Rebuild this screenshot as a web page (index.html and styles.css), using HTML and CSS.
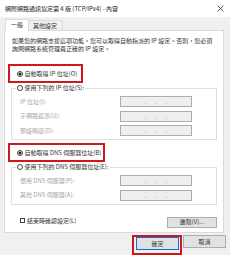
FILE: index.html
```html
<!DOCTYPE html>
<html lang="zh-Hant">
<head>
<meta charset="utf-8">
<title>網際網路通訊協定第 4 版 (TCP/IPv4) - 內容</title>
<link rel="stylesheet" href="styles.css">
</head>
<body>
<div class="titlebar">
  <span class="title">網際網路通訊協定第 4 版 (TCP/IPv4) - 內容</span>
  <svg class="close" width="7" height="7" viewBox="0 0 7 7"><path d="M0.5 0.5 L6.5 6.5 M6.5 0.5 L0.5 6.5" stroke="#333" stroke-width="0.8" fill="none"/></svg>
</div>
<div class="tabs">
  <div class="tab active">一般</div>
  <div class="tab">其他設定</div>
</div>
<div class="panel">
  <p class="desc">如果您的網路支援這項功能，您可以取得自動指派的 IP 設定。否則，您必須<br>詢問網路系統管理員正確的 IP 設定。</p>
  <div class="mark mark-ip">
    <div class="radio-row"><span class="radio checked"></span>自動取得 IP 位址(O)</div>
  </div>
  <fieldset class="group">
    <legend class="radio-row"><span class="radio"></span>使用下列的 IP 位址(S):</legend>
    <div class="field"><span class="flabel">IP 位址(I):</span><span class="ip"><i></i><i></i><i></i></span></div>
    <div class="field"><span class="flabel">子網路遮罩(U):</span><span class="ip"><i></i><i></i><i></i></span></div>
    <div class="field"><span class="flabel">預設閘道(D):</span><span class="ip"><i></i><i></i><i></i></span></div>
  </fieldset>
  <div class="mark mark-dns">
    <div class="radio-row"><span class="radio checked"></span>自動取得 DNS 伺服器位址(B)</div>
  </div>
  <fieldset class="group group-dns">
    <legend class="radio-row"><span class="radio"></span>使用下列的 DNS 伺服器位址(E):</legend>
    <div class="field"><span class="flabel">慣用 DNS 伺服器(P):</span><span class="ip"><i></i><i></i><i></i></span></div>
    <div class="field"><span class="flabel">其他 DNS 伺服器(A):</span><span class="ip"><i></i><i></i><i></i></span></div>
  </fieldset>
  <div class="bottom">
    <div class="check-row"><span class="checkbox"></span>結束時確認設定(L)</div>
    <div class="btn adv">進階(V)...</div>
  </div>
</div>
<div class="footer">
  <div class="mark-btn"><div class="btn fbtn default">確定</div></div>
  <div class="btn fbtn">取消</div>
</div>
</body>
</html>
```

FILE: styles.css
```css
* { box-sizing: border-box; }
html, body { margin: 0; padding: 0; }
body {
  width: 230px;
  height: 255px;
  overflow: hidden;
  background: #f0f0f0;
  font-family: "Noto Sans CJK TC", "Noto Sans", sans-serif;
  font-size: 6px;
  line-height: 8px;
  color: #333;
}
.titlebar {
  height: 17px;
  background: #fff;
  display: flex;
  align-items: center;
  justify-content: space-between;
  padding: 0 6px 0 5px;
}
.title { color: #222; }
.tabs {
  display: flex;
  align-items: flex-end;
  padding-left: 5px;
  margin-top: 2px;
  height: 11px;
}
.tab {
  height: 10px;
  line-height: 9px;
  padding: 0 5px 0 4px;
  border: 1px solid #dadada;
  border-bottom: none;
  border-left: none;
}
.tab.active {
  position: relative;
  height: 12px;
  margin-bottom: -1px;
  line-height: 10px;
  padding: 0 5px;
  background: #fff;
  border-left: 1px solid #dadada;
  border-right: 1px solid #dadada;
}
.panel {
  width: 220px;
  height: 203px;
  margin-left: 4px;
  background: #fff;
  border: 1px solid #dadada;
}
.desc {
  margin: 6px 0 0 7px;
  color: #333;
}
.mark {
  display: flex;
  align-items: center;
  height: 19px;
  margin-left: 3px;
  border: 2px solid #d2161e;
  padding-left: 7px;
}
.mark-ip { width: 75px; margin-top: 11px; }
.mark-dns { width: 97px; margin-top: 3px; }
.radio-row {
  display: flex;
  align-items: center;
  line-height: 8px;
}
.radio {
  width: 6px;
  height: 6px;
  border: 0.8px solid #444;
  border-radius: 50%;
  background: #fff;
  margin-right: 1.5px;
  flex: none;
}
.radio.checked {
  background: radial-gradient(circle, #222 0 1.3px, #fff 1.7px);
}
.group {
  width: 206px;
  margin: 1px 0 0 6px;
  padding: 4px 24px 3px 4px;
  border: 1px solid #e0e0e0;
  min-inline-size: 0;
}
.group legend {
  padding: 0 1px;
}
.field {
  display: flex;
  justify-content: space-between;
  align-items: center;
  height: 11px;
}
.field + .field { margin-top: 3.5px; }
.flabel {
  padding-left: 4px;
  color: #a6a6a6;
}
.ip {
  width: 72px;
  height: 11px;
  background: #eeeeee;
  border: 1px solid #adadad;
  display: flex;
  justify-content: space-evenly;
  align-items: flex-end;
  padding: 0 14px 2px 14px;
}
.ip i {
  width: 1px;
  height: 1px;
  background: #bdbdbd;
}
.bottom {
  display: flex;
  justify-content: space-between;
  align-items: center;
  height: 11px;
  margin: 12px 6px 0 15px;
}
.check-row {
  display: flex;
  align-items: center;
  margin-top: -3px;
}
.checkbox {
  width: 5px;
  height: 5px;
  border: 0.8px solid #444;
  margin-right: 2px;
}
.btn {
  display: flex;
  align-items: center;
  justify-content: center;
  background: #e1e1e1;
  border: 1px solid #adadad;
  color: #333;
}
.adv { width: 50px; height: 11px; }
.footer {
  display: flex;
  justify-content: flex-end;
  align-items: flex-start;
  padding: 2px 4px 0 0;
}
.mark-btn {
  border: 2px solid #d2161e;
  padding: 0 1px 3px 2px;
  margin-right: 1px;
}
.fbtn { width: 43px; height: 13px; }
.fbtn.default { border-color: #0078d7; }
```
